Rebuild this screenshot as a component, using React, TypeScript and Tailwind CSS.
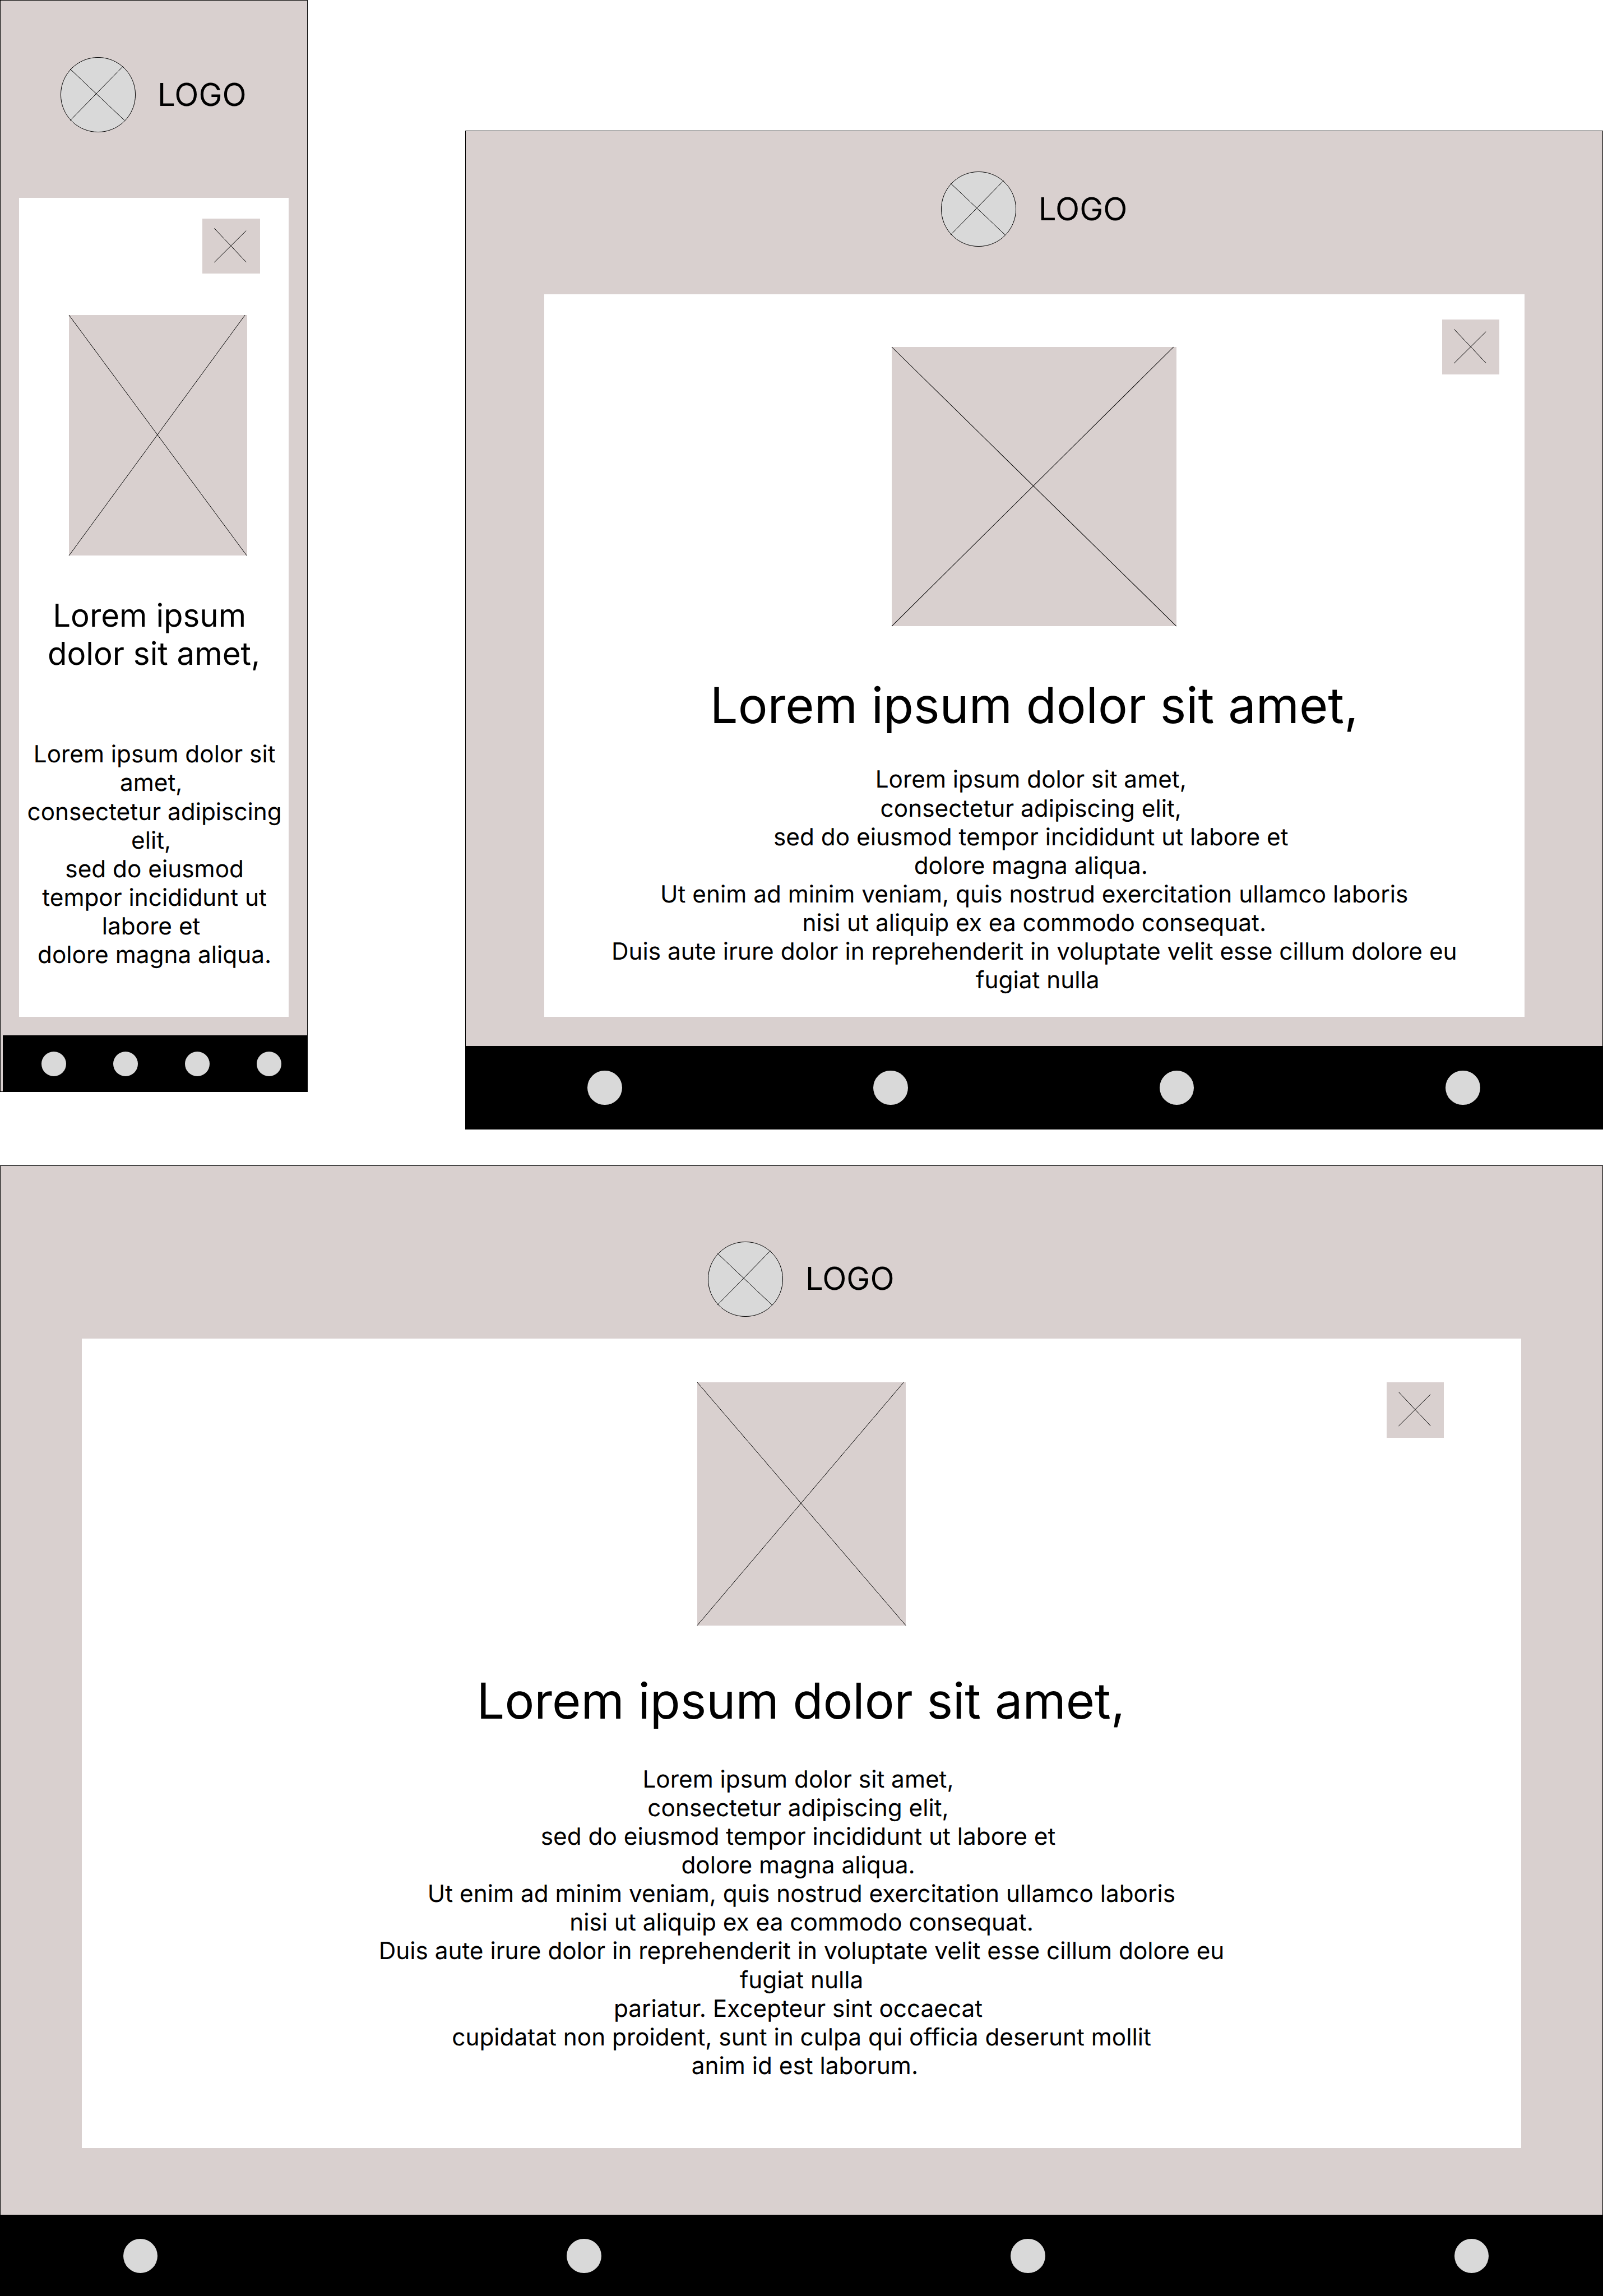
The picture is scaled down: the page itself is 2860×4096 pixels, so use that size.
import { clsx } from "clsx";

const LOREM_SHORT = [
  "Lorem ipsum dolor sit",
  "amet, ",
  "consectetur adipiscing",
  "elit, ",
  "sed do eiusmod",
  "tempor incididunt ut",
  "labore et ",
  "dolore magna aliqua.",
];

const LOREM_MEDIUM = [
  "Lorem ipsum dolor sit amet, ",
  "consectetur adipiscing elit, ",
  "sed do eiusmod tempor incididunt ut labore et ",
  "dolore magna aliqua. ",
  "Ut enim ad minim veniam, quis nostrud exercitation ullamco laboris",
  "nisi ut aliquip ex ea commodo consequat.",
  "Duis aute irure dolor in reprehenderit in voluptate velit esse cillum dolore eu",
];

const LOREM_LONG = [
  ...LOREM_MEDIUM,
  "fugiat nulla",
  "pariatur. Excepteur sint occaecat ",
  "cupidatat non proident, sunt in culpa qui officia deserunt mollit",
  " anim id est laborum.",
];

function Logo() {
  return (
    <div className="flex items-center gap-[39.5px]">
      <svg viewBox="0 0 152 152" className="size-[134px] shrink-0 overflow-visible" fill="none" stroke="#000" strokeWidth="1.13">
        <circle cx="76" cy="76" r="75.5" fill="#d9d9d9" />
        <path d="M19.5 24 129.5 128M19.5 128 126.5 18.5" />
      </svg>
      <span className="text-[56.42px] leading-[68.3px]">LOGO</span>
    </div>
  );
}

function CloseButton({ className }: { className: string }) {
  return (
    <button type="button" aria-label="Close" className={clsx("absolute h-[98.74px] w-[102.27px] bg-[#d9d0cf]", className)}>
      <svg viewBox="0 0 116 112" className="size-full" fill="none" stroke="#000" strokeWidth="1.13">
        <path d="M24.3 19.7 88.7 88M24.3 88.4 88.7 24.5" />
      </svg>
    </button>
  );
}

function ImagePlaceholder({ className }: { className: string }) {
  return (
    <div className={clsx("shrink-0 bg-[#d9d0cf]", className)}>
      <svg viewBox="0 0 100 100" preserveAspectRatio="none" className="size-full overflow-visible" fill="none" stroke="#000" strokeWidth="1">
        <path d="M0 0 100 100M0 100 99 0" vectorEffect="non-scaling-stroke" />
      </svg>
    </div>
  );
}

function Body({ lines, className }: { lines: string[]; className?: string }) {
  return (
    <p className={clsx("whitespace-pre text-center text-[42.32px] leading-[51.13px]", className)}>
      {lines.join("\n")}
    </p>
  );
}

function BottomBar({ className, dot }: { className: string; dot: string }) {
  return (
    <nav className={clsx("flex flex-1 items-start bg-black", className)}>
      {[0, 1, 2, 3].map((i) => (
        <span key={i} className={clsx("shrink-0 rounded-full bg-[#d9d9d9]", dot)} />
      ))}
    </nav>
  );
}

function MobileFrame() {
  return (
    <section className="flex h-[1948px] w-[549.3px] shrink-0 flex-col border border-black bg-[#d9d0cf]">
      <header className="h-[351.65px] shrink-0 pl-[106.56px] pt-[101.27px]">
        <Logo />
      </header>
      <main className="relative ml-[33.38px] flex h-[1461.74px] w-[480.49px] shrink-0 flex-col bg-white pt-[208.95px]">
        <CloseButton className="right-[51.13px] top-[37.03px]" />
        <ImagePlaceholder className="ml-[89.04px] h-[429.35px] w-[317.39px]" />
        <h1 className="mt-[72.8px] whitespace-pre text-center text-[56.42px] leading-[68.3px]">
          {"Lorem ipsum \ndolor sit amet,"}
        </h1>
        <Body lines={LOREM_SHORT} className="mt-[120px] pl-[2px]" />
      </main>
      <BottomBar className="ml-[4.29px] mt-[32.62px] gap-[83.84px] pl-[68.77px] pt-[29.1px]" dot="size-[44.08px]" />
    </section>
  );
}

function TabletFrame() {
  return (
    <section className="mt-[232.75px] flex h-[1781.77px] w-[2030.39px] shrink-0 flex-col border border-black bg-[#d9d0cf]">
      <header className="h-[291.7px] shrink-0 pl-[848.6px] pt-[72.2px]">
        <Logo />
      </header>
      <main className="relative ml-[140.06px] flex h-[1288.94px] w-[1749.15px] shrink-0 flex-col items-center bg-white pt-[93.45px]">
        <CloseButton className="right-[44.96px] top-[44.08px]" />
        <ImagePlaceholder className="h-[498.12px] w-[507.82px]" />
        <h1 className="mt-[89.2px] text-[88.16px] leading-[106.7px]">Lorem ipsum dolor sit amet,</h1>
        <Body lines={[...LOREM_MEDIUM, " fugiat nulla"]} className="mt-[52.5px]" />
      </main>
      <BottomBar className="mt-[52.02px] gap-[448.75px] pl-[217.2px] pt-[43.2px]" dot="size-[61.71px]" />
    </section>
  );
}

function DesktopFrame() {
  return (
    <section className="flex h-[2017.12px] w-full shrink-0 flex-col border border-black bg-[#d9d0cf]">
      <header className="h-[308.45px] shrink-0 pl-[1262.38px] pt-[134.77px]">
        <Logo />
      </header>
      <main className="relative ml-[145.35px] flex h-[1443.22px] w-[2567.3px] shrink-0 flex-col items-center bg-white pt-[77.58px]">
        <CloseButton className="right-[137.53px] top-[77.58px]" />
        <ImagePlaceholder className="h-[433.76px] w-[372.05px]" />
        <h1 className="mt-[82.4px] pr-[2px] text-[88.16px] leading-[106.7px]">Lorem ipsum dolor sit amet,</h1>
        <Body lines={LOREM_LONG} className="mt-[60px]" />
      </main>
      <BottomBar className="mt-[119.02px] gap-[730px] pl-[218.5px] pt-[43.2px]" dot="size-[61.71px]" />
    </section>
  );
}

export default function App() {
  return (
    <div className="flex h-[4096px] w-[2860px] flex-col overflow-hidden bg-white font-['Inter',sans-serif] text-black [text-rendering:geometricPrecision]">
      <div className="flex h-[2078.88px] shrink-0 items-start justify-between">
        <MobileFrame />
        <TabletFrame />
      </div>
      <DesktopFrame />
    </div>
  );
}
